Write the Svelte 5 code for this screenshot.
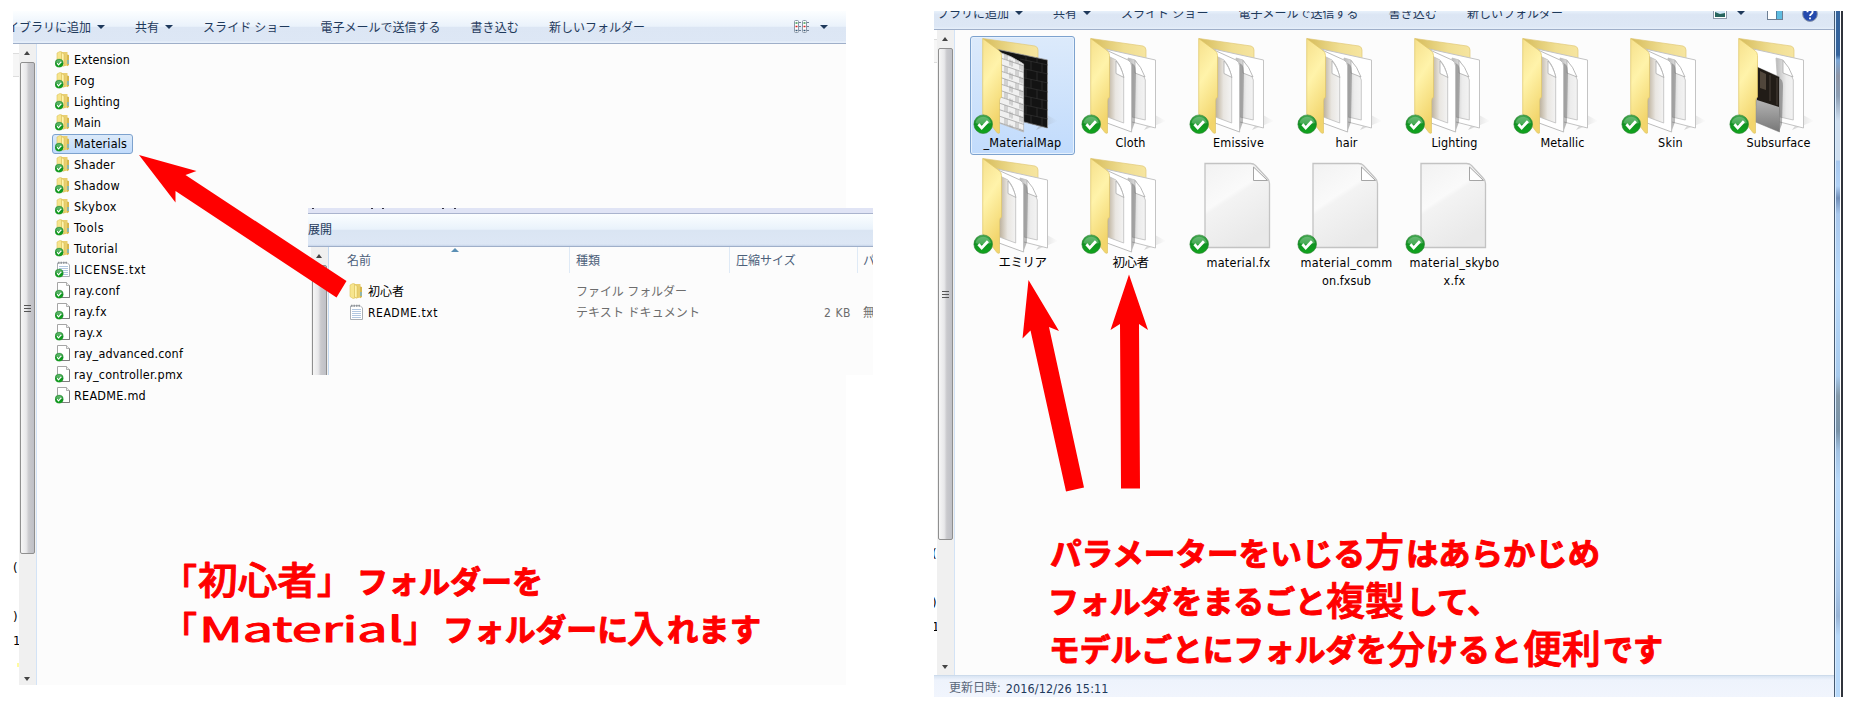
<script>
  const tools = [
    { text: 'イブラリに追加', w: 84, menu: true },
    { text: '共有', w: 24, menu: true },
    { text: 'スライド ショー', w: 87.5 },
    { text: '電子メールで送信する', w: 120 },
    { text: '書き込む', w: 48.5 },
    { text: '新しいフォルダー', w: 96 }
  ];

  const files = [
    ['Extension', 56, 'folder'], ['Fog', 21, 'folder'], ['Lighting', 46, 'folder'],
    ['Main', 27, 'folder'], ['Materials', 53, 'folder'], ['Shader', 41, 'folder'],
    ['Shadow', 46, 'folder'], ['Skybox', 43, 'folder'], ['Tools', 30, 'folder'],
    ['Tutorial', 44, 'folder'], ['LICENSE.txt', 72, 'text'], ['ray.conf', 46, 'page'],
    ['ray.fx', 33, 'page'], ['ray.x', 29, 'page'], ['ray_advanced.conf', 109, 'page'],
    ['ray_controller.pmx', 109, 'page'], ['README.md', 72, 'page']
  ];

  const tiles = [
    { lines: [['_MaterialMap', 78]], kind: 'map' },
    { lines: [['Cloth', 30]], kind: 'docs' },
    { lines: [['Emissive', 51]], kind: 'docs' },
    { lines: [['hair', 22]], kind: 'docs' },
    { lines: [['Lighting', 46]], kind: 'docs' },
    { lines: [['Metallic', 44]], kind: 'docs' },
    { lines: [['Skin', 25]], kind: 'docs' },
    { lines: [['Subsurface', 64]], kind: 'photo' },
    { lines: [['エミリア', 48]], kind: 'docs' },
    { lines: [['初心者', 36]], kind: 'docs' },
    { lines: [['material.fx', 64]], kind: 'file' },
    { lines: [['material_comm', 92], ['on.fxsub', 49]], kind: 'file' },
    { lines: [['material_skybo', 90], ['x.fx', 22]], kind: 'file' }
  ];

  // Callout runs: text, x, baseline, size, width, weight
  const notes = [
    ['「', 162, 594, 35, 35, 500], ['初心者', 198, 594, 38, 119, 500], ['」', 317, 594, 35, 35, 500], ['フォルダーを', 357, 593, 31, 186],
    ['「', 162, 642, 35, 35, 500], ['Material', 199, 642, 34, 204, 400], ['」', 403, 642, 35, 35, 500], ['フォルダーに', 443, 641, 31, 185],
    ['入', 627, 642, 38, 37, 500], ['れます', 667, 641, 31, 94],
    ['パラメーターをいじる', 1050, 565, 31, 315], ['方', 1365, 566, 39, 39, 500], ['はあらかじめ', 1406, 565, 31, 194],
    ['フォルダをまるごと', 1048, 613, 31, 278], ['複製', 1326, 615, 39, 78, 500], ['して、', 1406, 613, 31, 93],
    ['モデルごとにフォルダを', 1049, 661, 31, 338], ['分', 1387, 663, 38, 38, 500], ['けると', 1426, 661, 31, 96],
    ['便利', 1523, 663, 39, 78, 500], ['です', 1603, 661, 31, 60]
  ];

  // Spreads the letters of a label over the given width.
  function fit(node, width) {
    const n = [...node.textContent].length;
    const natural = node.getBoundingClientRect().width;
    node.style.letterSpacing = `${(width - natural) / n}px`;
  }
</script>

{#snippet toolbar(kind)}
  <div class="toolbar {kind}">
    {#each tools as t}
      <div class="tool"><span use:fit={t.w}>{t.text}</span>{#if t.menu}<i class="caret"></i>{/if}</div>
    {/each}
    <div class="views">
      {#if kind === 'full'}
        <svg width="16" height="14" viewBox="0 0 16 14">
          {#each [0, 8] as x}
            <rect x={x + 0.5} y="0.5" width="4" height="12" rx="1" fill="#fff" stroke="#8b98a8" />
            <path d="M{x + 5} 2.5h2M{x + 5} 6.5h2M{x + 5} 10.5h2" stroke="#6f8094" />
            <path d="M{x + 1.5} 3h2" stroke="#3a9a50" stroke-width="1.500" /><path d="M{x + 1.5} 6.5h2" stroke="#d22" stroke-width="1.500" /><path d="M{x + 1.5} 10.500h2" stroke="#357" stroke-width="1.500" />
          {/each}
        </svg>
        <i class="caret"></i>
      {:else}
        <svg width="14" height="12" viewBox="0 0 14 12">
          <rect x="0.5" y="0.5" width="13" height="11" fill="#fff" stroke="#8c99ab" />
          <path d="M2 2h10v8H2z" fill="#cfe6f6" /><path d="M2 5l5 2 5-1v4H2z" fill="#26655f" />
        </svg>
        <i class="caret"></i>
        <svg class="pane" width="16" height="14" viewBox="0 0 16 14">
          <rect x="0.5" y="0.5" width="15" height="13" fill="#fff" stroke="#6d7f94" />
          <path d="M10 1h5v12h-5z" fill="#5fbce0" /><path d="M9.5 1v12" stroke="#4d7d9f" />
        </svg>
        <svg class="help" width="16" height="16" viewBox="0 0 16 16">
          <circle cx="8" cy="8" r="7.4" fill="#2449ad" stroke="#8c98ac" />
          <path d="M5.4 6.2C5.4 2.8 10.8 3 10.6 6.1 10.5 8 8 8 8 10M8 11.6v1.6" fill="none" stroke="#fff" stroke-width="1.8" />
        </svg>
      {/if}
    </div>
  </div>
{/snippet}

{#snippet check()}
  <circle cx="9.5" cy="9.5" r="9.3" fill="url(#green)" stroke="#2a7d31" stroke-width=".6" />
  <path d="M1.8 8.2a7.8 7.2 0 0 1 15.4 0q-7.7 3-15.4 0z" fill="#fff" opacity=".22" />
  <path d="M4.7 9.5l3.3 3.7 6.2-6.7" fill="none" stroke="#fff" stroke-width="2.8" />
{/snippet}

{#snippet smallIcon(kind, badge)}
  <svg class="sicon" width="16" height="17" viewBox="0 0 16 17">
    {#if kind === 'folder'}
      <path d="M2 2l3-1.5 2 .5v14l-2 .5-3-2z" fill="#f7e58d" stroke="#dcc25c" stroke-width=".6" />
      <path d="M6 1h6.5v13.5L8 15.5 6 14z" fill="#e9cf70" />
      <path d="M6.5 1.5L9 3v12l-2.5-1z" fill="#fff3ad" stroke="#d4b84e" stroke-width=".5" />
      <path d="M12 3.5l2 .5v10l-2 1.2z" fill="#d7b74d" />
      <path d="M13 9v4" stroke="#5fb5ea" stroke-width="1.2" />
    {:else if kind === 'text'}
      <path d="M2.5 2v13.5h12V4L12 1.5z" fill="#fff" stroke="#a9aeb4" />
      <path d="M3 1.8h9" stroke="#8f9499" stroke-width="2" stroke-dasharray="1.5 1" />
      <path d="M4 5.5h9M4 7.5h9M4 9.5h9M4 11.5h9M4 13.5h9" stroke="#a9c1dc" stroke-width=".9" />
    {:else}
      <path d="M2.5 .5v15h12V3.500l-3-3z" fill="#fff" stroke="#a5a5a5" />
      <path d="M14.5 3.500v12h-8" fill="none" stroke="#7d7d7d" />
      <path d="M11.5 .5v3h3" fill="#eee" stroke="#a0a0a0" stroke-width=".8" />
    {/if}
    {#if badge}<g transform="translate(0 8) scale(.44)">{@render check()}</g>{/if}
  </svg>
{/snippet}

{#snippet scrollbar(kind)}
  <div class="scroll {kind}">
    <i class="up"></i>
    <div class="thumb"><i></i><i></i><i></i></div>
    <i class="down"></i>
  </div>
{/snippet}

{#snippet bigIcon(kind)}
  <svg class="bicon" width="104" height="100" viewBox="0 0 104 100">
    {#if kind === 'file'}
      <path d="M19.500 7.5H65q3 0 5 2l12 13q2 2 2 5v64H19.500z" transform="translate(-.5 0)" fill="url(#sheet)" stroke="#c3c3c3" stroke-width="1.3" />
      <path d="M67 8q3 5 0 16.500q9-3 15.500 1.500" fill="#ededed" />
      <path d="M67.500 11v13.500H81.500z" fill="#fff" stroke="#a5a5a5" stroke-width="1" />
    {:else}
      <path d="M66 94l22-9-11-6z" fill="url(#shade)" />
      <path d="M13 2.500L65 10q3 1 3 4v50L30 70z" fill="url(#back)" stroke="#e1c978" stroke-width=".7" />
      {#if kind === 'map'}
        <path d="M26 13l51.500 11v68L50 85z" fill="#131313" stroke="#999" stroke-width=".8" />
        <g clip-path="url(#rearClip)" fill="none" stroke="#303030" stroke-width=".8">
          {#each [0, 1, 2, 3, 4, 5, 6, 7, 8] as r}
            <path d="M50 {14 + r * 9}l28 6M{56 + (r % 2) * 5} {16 + r * 9}v9M{67 + (r % 2) * 5} {18 + r * 9}v9" />
          {/each}
        </g>
        <path d="M29 16q13 4 24.600 12v68L29 87z" fill="#f0f0f0" stroke="#bbb" stroke-width=".8" />
        <g clip-path="url(#frontClip)" fill="none" stroke="#8a8a8a" stroke-width=".6">
          {#each [0, 1, 2, 3, 4, 5, 6, 7, 8, 9, 10, 11] as r}
            <path d="M29 {15 + r * 6.500}l25 8.500M{35 + (r % 2) * 5} {17 + r * 6.500}v6M{37 + (r % 2) * 5} {18 + r * 6.500}v6M{46 + (r % 2) * 4} {21 + r * 6.500}v6M{48 + (r % 2) * 4} {22 + r * 6.500}v6" />
          {/each}
        </g>
      {:else}
        <path d="M25 12.500L77.500 24v68L50 85z" fill="#fff" stroke="#c4c4c4" />
        <path d="M50 22l7 2q6 7 10.300 20v40L54 81z" fill="url(#doc)" stroke="#bdbdbd" stroke-width=".8" />
        <path d="M57 24.500v12.500l10 4q-4-11-10-16.500z" fill="#fff" stroke="#a9a9a9" stroke-width=".8" />
        {#if kind === 'docs'}
          <path d="M53 27q5 1 5 9l-1 50-3 8z" fill="#555" opacity=".4" />
          <path d="M28 14l22 10q3.600 2 3.600 6v66L29 87z" fill="#fff" stroke="#bcbcbc" />
          <path d="M30 20l8 4q6 7 7.700 18v45L29.500 81z" fill="url(#inner)" stroke="#bdbdbd" stroke-width=".8" />
          <path d="M38 25v12.500l8 4Q43 30 38 25z" fill="#fff" stroke="#a9a9a9" stroke-width=".8" />
        {:else}
          <path d="M53 42q4 1 4 8l-1 38-3 8z" fill="#555" opacity=".45" />
          <path d="M31 31l22.500 10v55L29.500 86z" fill="url(#metal)" stroke="#777" stroke-width=".5" />
          <path d="M31 31l22 10v30L31 64z" fill="#211c17" />
          <path d="M34 35l6 3v16l-6-2z" fill="#5c5145" opacity=".8" /><path d="M44 39v26M51 42v27" stroke="#5b5147" stroke-width=".7" />
        {/if}
      {/if}
      <path d="M12.700 2.500L29 14.500q2.500 2 2.500 5V61q-2 1.500-2 4v32q-2 1-3-1L12.700 78z" fill="url(#flap)" stroke="#dfc667" stroke-width=".7" />
    {/if}
    <g transform="translate(3.700 78.700)">{@render check()}</g>
  </svg>
{/snippet}

<main class="page">
  <svg class="defs" width="0" height="0">
    <defs>
      <linearGradient id="green" x2="0" y2="1"><stop stop-color="#45a853" /><stop offset=".5" stop-color="#109322" /><stop offset="1" stop-color="#10a51c" /></linearGradient>
      <linearGradient id="flap" x2=".3" y2="1"><stop stop-color="#f6e08c" /><stop offset=".45" stop-color="#fff3aa" /><stop offset="1" stop-color="#f2d56c" /></linearGradient>
      <linearGradient id="back"><stop stop-color="#d6bc5c" /><stop offset=".6" stop-color="#f0de91" /><stop offset="1" stop-color="#f6e5a0" /></linearGradient>
      <linearGradient id="sheet" x2=".5" y2="1"><stop stop-color="#f2f2f2" /><stop offset=".45" stop-color="#fafafa" /><stop offset=".5" stop-color="#f3f3f3" /><stop offset="1" stop-color="#e9e9e9" /></linearGradient>
      <linearGradient id="doc"><stop stop-color="#b9b9b9" /><stop offset=".6" stop-color="#ececec" /><stop offset="1" stop-color="#f3f3f3" /></linearGradient>
      <linearGradient id="inner"><stop stop-color="#bcb09b" /><stop offset=".5" stop-color="#e9e6e1" /><stop offset="1" stop-color="#f3f3f3" /></linearGradient>
      <linearGradient id="metal" x2="0" y2="1"><stop offset=".5" stop-color="#b5b5b5" /><stop offset="1" stop-color="#777" /></linearGradient>
      <linearGradient id="shade"><stop stop-color="#888" stop-opacity=".35" /><stop offset="1" stop-color="#888" stop-opacity="0" /></linearGradient>
      <clipPath id="rearClip"><path d="M26 13l51.500 11v68L50 85z" /></clipPath>
      <clipPath id="frontClip"><path d="M29 16q13 4 24.600 12v68L29 87z" /></clipPath>
    </defs>
  </svg>

  <section class="left">
    {@render toolbar('full')}
    <div class="body">
      <div class="nav nav-l"><b></b><span>(</span><span>)</span><span>1</span><em></em></div>
      {@render scrollbar('tall')}
      <div class="list">
        {#each files as [name, w, kind]}
          <div class="row" class:selected={name === 'Materials'}>
            {@render smallIcon(kind, true)}<span use:fit={w}>{name}</span>
          </div>
        {/each}
      </div>
    </div>

    <div class="zip">
      <div class="strip"></div>
      <div class="ziptool">展開</div>
      <div class="zipbody">
        {@render scrollbar('short')}
        <div class="table">
          <div class="tr th">
            <span class="c1">名前<i class="sort"></i></span><span class="c2">種類</span><span class="c3">圧縮サイズ</span><span class="c4">パ</span>
          </div>
          <div class="tr">
            <span class="c1">{@render smallIcon('folder', false)}<b use:fit={36}>初心者</b></span><span class="c2"><b use:fit={111}>ファイル フォルダー</b></span>
          </div>
          <div class="tr">
            <span class="c1">{@render smallIcon('text', false)}<b use:fit={70}>README.txt</b></span><span class="c2"><b use:fit={124}>テキスト ドキュメント</b></span><span class="c3 size"><b use:fit={27}>2 KB</b></span><span class="c4">無</span>
          </div>
        </div>
      </div>
    </div>
  </section>

  <section class="right">
    <div class="window">
      {@render toolbar('cut')}
      <div class="body">
        <div class="nav nav-r"><b></b><span>(</span><span>)</span><span>1</span><em></em></div>
        {@render scrollbar('tall')}
        <div class="grid">
          {#each tiles as tile, i}
            <div class="tile" class:selected={i === 0}>
              {@render bigIcon(tile.kind)}
              {#each tile.lines as [text, w]}
                <div class="label"><span use:fit={w}>{text}</span></div>
              {/each}
            </div>
          {/each}
        </div>
      </div>
      <div class="status"><span class="key">更新日時:</span><span use:fit={103}>2016/12/26 15:11</span></div>
    </div>
    <div class="frame"></div>
  </section>

  <svg class="overlay" width="1853" height="706" viewBox="0 0 1853 706">
    <g fill="#f00">
      <path d="M139 155L196.500 171 185.500 175 346.500 281 336.500 297.500 175.500 191 175.500 202.500z" />
      <path d="M1028.500 280L1059 331 1049 327 1084 487.500 1066 491.500 1030.500 330.500 1022.500 338.500z" />
      <path d="M1129 274.500L1148 330 1139 324 1140 488.500 1121 488.500 1120 324 1110.500 330z" />
    </g>
    {#each notes as [text, x, y, size, w, weight]}
      <text class="note" {x} {y} font-size={size} font-weight={weight ?? 700} textLength={w} lengthAdjust="spacingAndGlyphs">{text}</text>
    {/each}
  </svg>
</main>

<style>
  :global(body) { background: #fff; overflow: hidden; }
  .page {
    position: relative; box-sizing: border-box; width: 1853px; height: 706px; padding: 11px 10px 0 13px;
    display: flex; align-items: flex-start; gap: 88px; overflow: hidden;
    font: 12.500px/18px "DejaVu Sans Condensed", "Noto Sans CJK JP", sans-serif; font-stretch: condensed; color: #000; white-space: nowrap;
  }
  .defs, .overlay { position: absolute; left: 0; top: 0; pointer-events: none; }
  .left { position: relative; width: 833px; height: 674px; background: #fcfcfc; display: flex; flex-direction: column; flex: none; }
  .right { width: 909px; height: 686px; display: flex; flex: none; }
  .window { width: 900px; display: flex; flex-direction: column; background: #fcfcfc; }

  .toolbar {
    box-sizing: border-box; display: flex; align-items: center; gap: 30px; overflow: hidden; flex: none;
    border-bottom: 1px solid #9fafc9; color: #1e395b; font: 12px/18px "Noto Sans CJK JP", sans-serif;
  }
  .toolbar.full { height: 33px; padding: 0 18px 1px 0; background: linear-gradient(#fcfeff, #eaf2fb 48%, #dce6f4 50%, #dde7f5 94%, #e6effa 96%); }
  .toolbar.cut { height: 19px; padding: 0 16px 15px 0; background: linear-gradient(#e8f1fb, #dce6f4 20%, #dde7f5 85%, #e6effa); }
  .full .tool:first-child { margin-left: -6px; }
  .cut .tool:first-child { margin-left: -9px; }
  .tool { display: flex; align-items: center; gap: 6px; flex: none; }
  .caret { border: 4px solid transparent; border-top-color: #1e395b; border-bottom: 0; width: 0; height: 0; flex: none; }
  .views { margin-left: auto; display: flex; align-items: center; gap: 10px; flex: none; }
  .cut .pane { margin-left: 12px; }
  .cut .help { margin: 2px 0 0 9px; }

  .body { flex: 1; display: flex; min-height: 0; }
  .nav { width: 6px; flex: none; display: flex; flex-direction: column; overflow: hidden; font-size: 13px; line-height: 14px; background: #fff; }
  .nav-r { width: 3px; }
  .nav b { box-sizing: border-box; height: 24px; margin-top: 9px; background: #f6f6f6; border: solid #ddd; border-width: 1px 0; }
  .nav span:nth-child(2) { margin-top: 484px; }
  .nav span:nth-child(3) { margin-top: 35px; }
  .nav span:nth-child(4) { margin-top: 10px; }
  .nav em { margin: 15px 0 0 4px; height: 4px; background: #fffba0; }
  .nav-r span { margin-left: -2px; }

  .scroll { box-sizing: border-box; width: 18px; flex: none; background: #f0f0f0; border-right: 1px solid #d3e3f6; display: flex; flex-direction: column; align-items: center; padding-right: 1px; }
  .up { border: 3.500px solid transparent; border-bottom: 4px solid #444; border-top: 0; margin-top: 7px; }
  .down { border: 3.500px solid transparent; border-top: 4px solid #444; border-bottom: 0; margin: auto 0 4px; }
  .nav-r + .scroll .down { margin-bottom: 6px; }
  .thumb {
    box-sizing: border-box; width: 15px; height: 492px; margin-top: 7px; border: 1px solid #8f8f8f; border-radius: 2px;
    background: linear-gradient(90deg, #f6f6f6, #e8e8ea 40%, #c9c9cd 60%, #bfc0c6); display: flex; flex-direction: column; align-items: center; justify-content: center; gap: 2px;
  }
  .thumb i { width: 7px; height: 1px; background: #555; }
  .short { width: 21px; padding-left: 3px; background: linear-gradient(90deg, #fcfcfc 3px, #f0f0f0 3px); border-color: #c3d8ef; overflow: hidden; }
  .short .thumb { height: 200px; margin-top: 7px; flex: none; }
  .short .thumb i, .short .down { display: none; }

  .list { padding: 5px 0 0 15px; display: flex; flex-direction: column; align-items: flex-start; }
  .row { box-sizing: border-box; height: 21px; display: flex; align-items: center; border: 1px solid transparent; border-radius: 3px; padding: 0 5px 0 2px; }
  .row.selected { border-color: #7da2ce; background: linear-gradient(#dceaf9, #c1dbfc); height: 20px; margin-top: 1px; padding-bottom: 1px; }
  .sicon { flex: none; margin-right: 3px; }

  .zip { position: absolute; left: 295px; top: 197px; width: 565px; height: 167px; background: #fcfcfc; overflow: hidden; display: flex; flex-direction: column; }
  .strip {
    height: 5px; border-bottom: 1px solid #aab4ce;
    background: linear-gradient(90deg, transparent 4px, #334 4px 6px, transparent 6px 63px, #334 63px 65px, transparent 65px 74px, #334 74px 76px, transparent 76px 134px, #334 134px 136px, transparent 136px 146px, #334 146px 148px, transparent 148px) 0 0 / 100% 1px no-repeat, #e0e4f5;
  }
  .ziptool { box-sizing: border-box; height: 33px; background: linear-gradient(#fbfeff, #e9f2fb 48%, #dae5f3 50%, #dde7f5 94%, #c7d5ea); border-bottom: 1px solid #9fafc9; color: #1e395b; font: 12px/29px "Noto Sans CJK JP", sans-serif; }
  .zipbody { flex: 1; display: flex; min-height: 0; }
  .table { flex: 1; }
  .tr { display: grid; grid-template-columns: 241px 160px 128px 20px; height: 21px; align-items: center; color: #6d6d6d; }
  .tr span { display: flex; align-items: center; font-size: 12px; }
  .tr b { font-weight: 400; }
  .th { height: 26px; margin-bottom: 8px; color: #4c607a; align-items: stretch; }
  .th span { box-sizing: border-box; border-right: 1px solid #dfeaf6; padding-top: 1px; }
  .tr .c1 { padding-left: 20px; color: #000; }
  .th .c1 { padding-left: 18px; color: #4c607a; }
  .c1 .sicon { margin-left: -1px; margin-right: 4px; }
  .tr .c2, .tr .c3 { padding-left: 6px; }
  .tr .c4 { padding-left: 5px; overflow: hidden; }
  .tr .size { justify-content: flex-end; padding-right: 7px; }
  .sort { margin: -21px 0 0 80px; border: 4px solid transparent; border-top: 0; border-bottom-color: #5b8fb4; }

  .grid { padding: 6px 0 0 15px; display: grid; grid-template-columns: repeat(8, 105px); grid-auto-rows: 119px; column-gap: 3px; row-gap: 1px; align-content: start; }
  .tile { box-sizing: border-box; border: 1px solid transparent; border-radius: 3px; display: flex; flex-direction: column; align-items: center; }
  .tile.selected { border-color: #7da2ce; background: linear-gradient(#dceafb, #c1dbfc); box-shadow: inset 0 0 0 1px #e6f1fd; }
  .bicon { flex: none; align-self: flex-start; margin: -1px -1px -2px; }
  .label { height: 18px; }
  .status { box-sizing: border-box; height: 22px; flex: none; padding: 4px 0 0 15px; display: flex; gap: 5px; line-height: 17px; background: linear-gradient(#d9e5f3, #eef3fc 4px, #f1f5fd); border-top: 1px solid #cddbeb; color: #1e395b; }
  .key { color: #5a6779; font-size: 12px; }
  .frame {
    width: 9px; box-sizing: border-box; border-left: 1px solid #465a70; border-right: 2px solid #30343c;
    background: linear-gradient(90deg, #d9ecff 1px, transparent 1px 5px, #fff 5px),
      linear-gradient(#34639c 0 44px, #7ba7d7 49px, #8f96a6 65px, #8c9eb4 85px, #cfdff0 110px 149px, #a7c8ef 150px, #b1d2f7 175px, #718fb9 187px, #a9c8ed 203px, #badbfc 270px, #a7caed 365px, #8499a9 385px, #7892a8 420px, #a3c3e4 440px, #b8d9fa 470px, #b7d7f8 520px, #a6c5e8 580px, #98b4d6 605px, #b8d9fa 625px);
  }
  .note { font-family: "Noto Sans CJK JP", sans-serif; fill: #f00; stroke: #f00; stroke-width: 1px; stroke-linejoin: round; }
</style>
